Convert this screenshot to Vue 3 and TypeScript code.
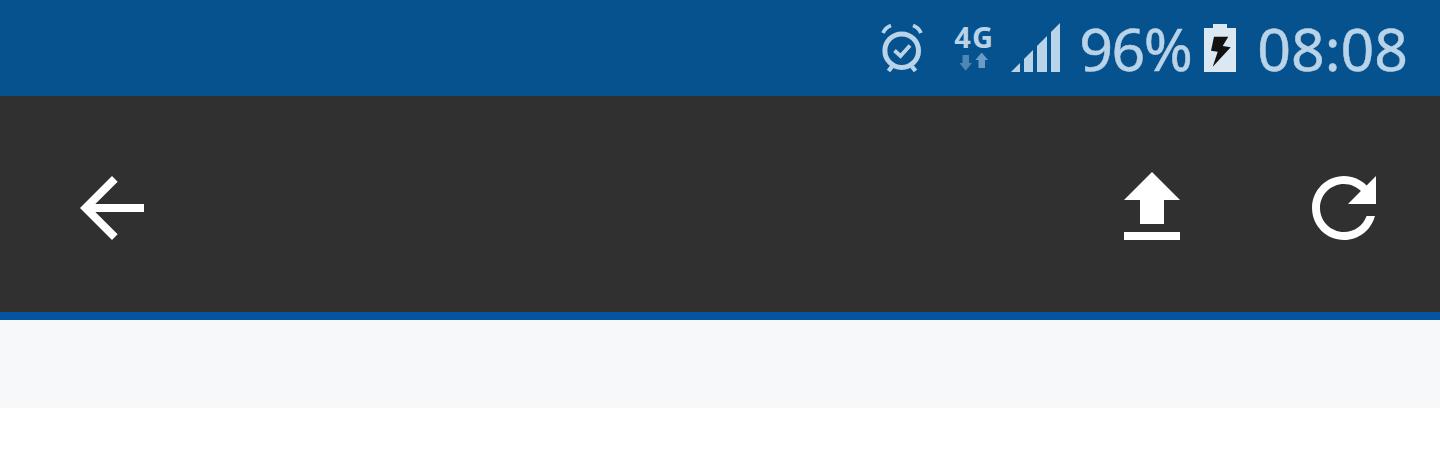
<script setup lang="ts">
const statusColor = '#b9d3e8';
</script>

<template>
    <div class="screen">
        <header class="status-bar">
            <svg class="alarm" width="46" height="52" viewBox="880 22 46 52" fill="none" :stroke="statusColor">
                <circle cx="901.700" cy="50.700" r="16.800" stroke-width="5" />
                <path d="M894.500 50.500l6 5.500 9.500-10.500" stroke-width="3.800" />
                <path d="M883 33c1.500-3.500 4-6 8-7.500M921 33c-1.500-3.500-4-6-8-7.500" stroke-width="3.800" />
                <path d="M888.500 71l3.500-4.500M915.500 71l-3.500-4.500" stroke-width="4.400" />
            </svg>
            <div class="network">
                <span class="network__label">4G</span>
                <svg class="network__arrows" width="30" height="18" viewBox="959 54 30 18">
                    <path d="M962.500 56h6.500v8h3l-6.300 7.800-6.300-7.800h3.100z" fill="#4f86b5" />
                    <path d="M978.500 69h6.500v-8h3l-6.300-7.500-6.300 7.500h3.100z" fill="#6a9cc6" />
                </svg>
            </div>
            <svg class="signal" width="49" height="49" viewBox="1011 23 49 49" :fill="statusColor">
                <path d="M1011 72l9-9v9z" />
                <path d="M1024 59l9-9v22h-9z" />
                <path d="M1037 46l10-10v36h-10z" />
                <path d="M1051 32l9-9v49h-9z" />
            </svg>
            <span class="status-text status-text--level">96%</span>
            <svg class="battery" width="32" height="48" viewBox="1204 24 32 48">
                <path d="M1213 24h14v4h9v44h-32v-44h9z" fill="#dbe7f1" />
                <path d="M1214 36.700h14.300l-5.600 9.300 8 1.300-18 19.400 5-15-6.700-1z" fill="#111" />
            </svg>
            <span class="status-text">08:08</span>
        </header>

        <nav class="toolbar">
            <button class="toolbar__button" type="button">
                <svg width="96" height="96" viewBox="0 0 24 24" fill="#fff">
                    <path d="M20 11H7.830l5.590-5.590L12 4l-8 8 8 8 1.410-1.410L7.830 13H20v-2z" />
                </svg>
            </button>
            <div class="toolbar__spacer"></div>
            <button class="toolbar__button" type="button">
                <svg width="96" height="96" viewBox="0 0 24 24" fill="#fff">
                    <path d="M9 16h6v-6h4l-7-7-7 7h4zm-4 2h14v2H5z" />
                </svg>
            </button>
            <button class="toolbar__button" type="button">
                <svg width="96" height="96" viewBox="0 0 24 24" fill="#fff">
                    <path d="M17.650 6.350C16.200 4.900 14.210 4 12 4c-4.420 0-7.990 3.580-7.990 8s3.570 8 7.990 8c3.730 0 6.840-2.550 7.730-6h-2.080c-.82 2.330-3.040 4-5.650 4-3.310 0-6-2.690-6-6s2.690-6 6-6c1.660 0 3.140.69 4.220 1.780L13 11h7V4l-2.350 2.350z" />
                </svg>
            </button>
        </nav>

        <div class="strip"></div>
    </div>
</template>

<style>
html,
body {
    background: #fff;
    overflow: hidden;
}
</style>

<style scoped>
.screen {
    display: flex;
    flex-direction: column;
    width: 1440px;
    height: 453px;
    background: #fff;
    font-family: "Noto Sans", sans-serif;
}

.status-bar {
    display: flex;
    justify-content: flex-end;
    align-items: center;
    box-sizing: border-box;
    height: 96px;
    padding: 0 32px 0 0;
    background: #05528f;
    color: #b9d3e8;
}

.alarm {
    margin-right: 29px;
}

.network {
    display: flex;
    flex-direction: column;
    align-items: center;
    width: 38px;
    margin-right: 18px;
    padding-bottom: 2px;
}

.network__label {
    font-size: 29px;
    font-weight: 700;
    line-height: 26px;
    letter-spacing: 1px;
}

.network__arrows {
    margin-top: 3px;
}

.signal {
    margin-right: 19px;
    margin-top: -1px;
}

.status-text {
    font-size: 59px;
    line-height: 96px;
    -webkit-text-stroke: 0.5px #b9d3e8;
}

.status-text--level {
    letter-spacing: -1.5px;
}

.battery {
    margin: 0 21px 0 13px;
}

.toolbar {
    display: flex;
    align-items: center;
    box-sizing: border-box;
    height: 224px;
    padding: 8px 48px 0 64px;
    border-bottom: 8px solid #0554a0;
    background: #303030;
}

.toolbar__spacer {
    flex: 1;
}

.toolbar__button {
    display: flex;
    width: 96px;
    height: 96px;
    padding: 0;
    border: 0;
    background: none;
}

.toolbar__button + .toolbar__button {
    margin-left: 96px;
}

.strip {
    height: 88px;
    background: #f6f8f9;
}
</style>
